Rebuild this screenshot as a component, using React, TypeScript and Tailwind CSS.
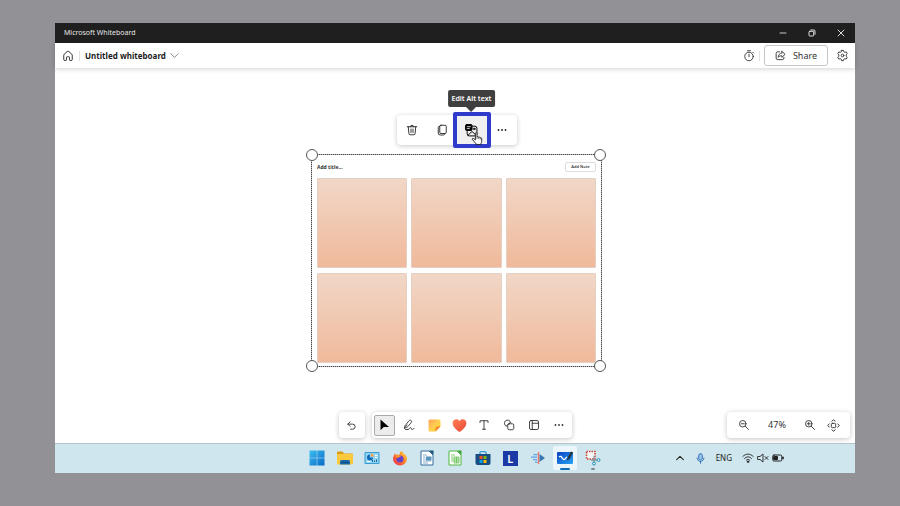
import type { ReactNode, SVGProps } from "react";

function Icon({ children, className = "size-3", ...rest }: SVGProps<SVGSVGElement>) {
  return (
    <svg
      viewBox="0 0 24 24"
      fill="none"
      stroke="currentColor"
      strokeWidth="1.8"
      strokeLinecap="round"
      strokeLinejoin="round"
      aria-hidden="true"
      className={"shrink-0 " + className}
      {...rest}
    >
      {children}
    </svg>
  );
}

function IconButton({ label, className = "", children }: { label: string; className?: string; children: ReactNode }) {
  return (
    <button type="button" aria-label={label} className={"flex items-center justify-center " + className}>
      {children}
    </button>
  );
}

const dots = (
  <Icon fill="currentColor" stroke="none">
    <circle cx="5" cy="12" r="1.8" />
    <circle cx="12" cy="12" r="1.8" />
    <circle cx="19" cy="12" r="1.8" />
  </Icon>
);

function TitleBar() {
  return (
    <div className="flex h-5 items-center justify-between bg-[#1f1f1f] pl-[9px] text-[#e8e8e8]">
      <span className="text-[7px]/5">Microsoft Whiteboard</span>
      <div className="flex h-full">
        <IconButton label="Minimize" className="w-[29px]">
          <Icon className="size-2"><path d="M3 12h18" strokeWidth="2.5" /></Icon>
        </IconButton>
        <IconButton label="Restore" className="w-[29px]">
          <Icon className="size-2" strokeWidth="2.8">
            <rect x="3" y="7" width="14" height="14" rx="2" />
            <path d="M8 3h10a3 3 0 0 1 3 3v10" />
          </Icon>
        </IconButton>
        <IconButton label="Close" className="w-[29px]">
          <Icon className="size-2" strokeWidth="2.8"><path d="M3 3l18 18M21 3L3 21" /></Icon>
        </IconButton>
      </div>
    </div>
  );
}

function Header() {
  return (
    <header className="relative z-10 flex h-[25px] items-center justify-between bg-white px-[6px] shadow-[0_1px_5px_rgba(0,0,0,0.18)]">
      <div className="flex items-center">
        <IconButton label="Home" className="size-[13px]">
          <Icon className="size-[12px]" strokeWidth="1.6">
            <path d="M3.500 10.300c0-.8.3-1.400.9-1.900l6-5.300a2.400 2.400 0 0 1 3.200 0l6 5.300c.6.500.9 1.100.9 1.900V19a2 2 0 0 1-2 2h-2a1.500 1.500 0 0 1-1.500-1.500V15a1.500 1.500 0 0 0-1.500-1.500h-3A1.500 1.500 0 0 0 9 15v4.500A1.500 1.500 0 0 1 7.500 21h-2a2 2 0 0 1-2-2z" />
          </Icon>
        </IconButton>
        <span className="ml-[5px] h-[10px] w-px bg-[#e0e0e0]" />
        <button type="button" className="ml-[5px] flex items-center gap-1 text-[8px]/4 font-bold text-[#1b1b1b]">
          <span>Untitled whiteboard</span>
          <Icon className="size-[9px] text-[#555]"><path d="M2 7l10 10L22 7" /></Icon>
        </button>
      </div>
      <div className="flex items-center text-[#333]">
        <IconButton label="Timer" className="size-[13px]">
          <Icon className="size-[12px]">
            <circle cx="12" cy="13" r="8.500" />
            <path d="M12 8.500v5M9 1.500h6M19.500 4.500L21 6" />
          </Icon>
        </IconButton>
        <span className="mx-[4px] h-[10px] w-px bg-[#e0e0e0]" />
        <button type="button" className="flex h-[21px] w-[64px] items-center justify-center gap-[7px] rounded-[3px] border border-[#c6c6c6] text-[9px]/4 text-[#333]">
          <Icon className="size-[11px]" strokeWidth="2">
            <path d="M10 4H6a3.500 3.500 0 0 0-3.500 3.500v10A3.500 3.500 0 0 0 6 21h10a3.500 3.500 0 0 0 3.500-3.500V16" />
            <path d="M15 3l7 6.500-7 6.500v-3.500c-4 0-6 1-8 3.500 0-5 3-9 8-9.500z" />
          </Icon>
          <span>Share</span>
        </button>
        <IconButton label="Settings" className="ml-[8px] size-[13px]">
          <Icon className="size-[13px]" strokeWidth="1.700">
            <path d="M10.200 2.500h3.600l.7 2.700 1.700 1 2.700-.8 1.900 3.200-2 1.900v3l2 1.900-1.900 3.200-2.700-.8-1.700 1-.7 2.700h-3.600l-.7-2.700-1.700-1-2.700.8-1.900-3.200 2-1.900v-3l-2-1.900 1.900-3.200 2.700.8 1.700-1z" />
            <circle cx="12" cy="12" r="2.500" />
          </Icon>
        </IconButton>
      </div>
    </header>
  );
}

function SelectionToolbar() {
  return (
    <div role="toolbar" aria-label="Selection" className="flex h-[30px] items-center rounded-[4px] bg-white text-[#222] shadow-[0_1px_5px_rgba(0,0,0,0.22)]">
      <IconButton label="Delete" className="size-[30px]">
        <Icon>
          <path d="M2.500 5.500h19M9 5.500a3 3 0 0 1 6 0M4.500 5.500l1.300 13.400A2.500 2.500 0 0 0 8.300 21.500h7.400a2.500 2.500 0 0 0 2.500-2.600L19.500 5.500M10 10v7M14 10v7" />
        </Icon>
      </IconButton>
      <IconButton label="Copy" className="size-[30px]">
        <Icon>
          <rect x="7.500" y="2.500" width="13" height="16.500" rx="2.500" />
          <path d="M7.500 4.500A2.500 2.500 0 0 0 4.500 7v11a4 4 0 0 0 4 4h6.500a2.500 2.500 0 0 0 2.500-2" />
        </Icon>
      </IconButton>
      <div className="relative -mx-[4px]">
        <button type="button" aria-label="Edit Alt text" className="flex h-[36px] w-[38px] items-center justify-center rounded-[2px] border-[4px] border-[#2f3bcb] bg-[#f0f0f0] text-black">
          <Icon className="size-[13px]">
            <path d="M14 4h4a4 4 0 0 1 4 4v10a4 4 0 0 1-4 4H8a4 4 0 0 1-4-4v-4" />
            <path d="M5.500 21l6-6a2.200 2.200 0 0 1 3 0l6 6" />
            <circle cx="17" cy="9" r="1.500" />
            <rect x="1" y="1" width="12" height="11" rx="2" fill="#000" />
            <path d="M4 5h6M4 8.500h4" stroke="#fff" strokeWidth="1.500" />
          </Icon>
        </button>
        <div role="tooltip" className="absolute bottom-full left-1/2 mb-[5px] -translate-x-1/2 rounded-[2px] bg-[#3f3f3f] px-1 text-[7px]/[17px] font-semibold whitespace-nowrap text-white">
          Edit Alt text
          <svg viewBox="0 0 10 5" aria-hidden="true" className="absolute top-full left-1/2 h-[5px] w-[10px] -translate-x-1/2">
            <path d="M0 0h10L5 5z" fill="#3f3f3f" />
          </svg>
        </div>
        <svg viewBox="0 0 22 24" aria-hidden="true" className="absolute top-[20px] left-[18px] h-[13px] w-[12px]">
          <path d="M8 2.500c0-1.800 3-1.800 3 0V9c1-.8 2.800-.4 3 .6 1-.6 2.500 0 2.700 1 1.300-.6 3 .1 3 1.600V17c0 2-1 3-1.500 4.500V23H9v-1.500C7 19 5 16.500 2.500 14c-1-1.500.8-2.800 2.200-1.900L8 14.500z" fill="#fff" stroke="#111" strokeWidth="1.600" strokeLinejoin="round" />
          <path d="M11 9v4M14 10v3M17 11v3" stroke="#333" strokeWidth="1.200" />
        </svg>
      </div>
      <IconButton label="More actions" className="size-[30px]">{dots}</IconButton>
    </div>
  );
}

function Board() {
  const handle = "absolute size-[12px] rounded-full border border-[#555] bg-white";
  return (
    <section aria-label="Note grid" className="relative w-[291px] border border-dotted border-[#444] bg-[#b4b4b4]">
      <div className="bg-white px-[5px] pb-[3px]">
        <div className="flex h-[23px] items-center justify-between text-[#333]">
          <h2 className="text-[5px]/3 font-bold">Add title...</h2>
          <button type="button" className="h-[10px] w-[31px] rounded-[2px] border border-[#ddd] text-[4px]/[8px] font-semibold">Add Note</button>
        </div>
        <div className="grid grid-cols-3 gap-x-[4px] gap-y-[5px]">
          {[0, 1, 2, 3, 4, 5].map((n) => (
            <div key={n} className="h-[90px] rounded-[1px] border border-[#e4cfc3] bg-linear-to-b from-[#f1d7c7] to-[#f0b99b]" />
          ))}
        </div>
      </div>
      <span className={handle + " -top-[6px] -left-[6px]"} />
      <span className={handle + " -top-[6px] -right-[5px]"} />
      <span className={handle + " -bottom-[6px] -left-[6px]"} />
      <span className={handle + " -right-[5px] -bottom-[6px]"} />
    </section>
  );
}

const panel = "flex h-[26px] items-center rounded-[4px] bg-white shadow-[0_1px_5px_rgba(0,0,0,0.24)]";

function BottomBar() {
  return (
    <div className="grid grid-cols-[1fr_auto_1fr] items-center px-[5px] pb-[5px] text-[#333]">
      <div className="col-start-2 flex gap-[7px]">
        <div className={panel}>
          <IconButton label="Undo" className="size-[26px]">
            <Icon className="size-[11px]" strokeWidth="2">
              <path d="M9 14L4 9l5-5M4 9h10.500a5.500 5.500 0 0 1 0 11H10" />
            </Icon>
          </IconButton>
        </div>
        <div role="toolbar" aria-label="Tools" className={panel}>
          <IconButton label="Select" className="mx-[2px] size-[21px] rounded-[2px] border border-[#aaa] bg-[#ececec]">
            <Icon fill="#000" stroke="none"><path d="M5 1v21.500l6.500-6.500H22z" /></Icon>
          </IconButton>
          <IconButton label="Ink" className="size-[25px]">
            <Icon>
              <path d="M3 18c0-3 1-5 3-7l6-7.500c3-3 7 .5 4.500 3.500L10 15c-2 2-4 3-7 3zM3 18l5-6M5 21h5c3 0 3-4 5-4s1 4 3 4 2-2 4-2" />
            </Icon>
          </IconButton>
          <IconButton label="Notes" className="size-[25px]">
            <svg viewBox="0 0 24 24" aria-hidden="true" className="size-[13px]">
              <defs><linearGradient id="note" x1="0" y1="0" x2="1" y2="1"><stop stopColor="#ff9e58" /><stop offset=".5" stopColor="#ffd04f" /><stop offset="1" stopColor="#ffc52e" /></linearGradient></defs>
              <path d="M3 1h17a3 3 0 0 1 3 3v10l-9 9H3a2 2 0 0 1-2-2V3a2 2 0 0 1 2-2z" fill="url(#note)" />
              <path d="M14 23v-6a3 3 0 0 1 3-3h6z" fill="#ee8a35" />
            </svg>
          </IconButton>
          <IconButton label="Reactions" className="size-[25px]">
            <svg viewBox="0 0 24 24" aria-hidden="true" className="size-[15px]">
              <defs><linearGradient id="heart" x1="0" y1="0" x2="1" y2="1"><stop stopColor="#ff8052" /><stop offset="1" stopColor="#e94738" /></linearGradient></defs>
              <path d="M12 22.500C7 19 1 14 1 8c0-6.500 8-8 11-3 3-5 11-3.500 11 3 0 6-6 11-11 14.500z" fill="url(#heart)" />
            </svg>
          </IconButton>
          <IconButton label="Text" className="size-[25px]">
            <Icon><path d="M4 7V3.500h16V7M12 3.500v17M9 20.500h6" /></Icon>
          </IconButton>
          <IconButton label="Shapes" className="size-[25px]">
            <Icon>
              <path d="M6.500 14.500A6.500 6.500 0 1 1 15.500 7" />
              <rect x="9.500" y="9.500" width="12" height="12" rx="3" />
              <path d="M7 14l7-7" />
            </Icon>
          </IconButton>
          <IconButton label="Templates" className="size-[25px]">
            <Icon><rect x="3" y="3" width="18" height="18" rx="3" /><path d="M8.500 3v18M8.500 8.500H21" /></Icon>
          </IconButton>
          <IconButton label="More tools" className="size-[25px]">{dots}</IconButton>
        </div>
      </div>
      <div className={panel + " justify-self-end text-[9px]/4"}>
        <IconButton label="Zoom out" className="w-[33px]">
          <Icon><circle cx="9.500" cy="9.500" r="6.500" /><path d="M14.500 14.500L21 21M6.500 9.500h6" /></Icon>
        </IconButton>
        <span className="w-[34px] text-center">47%</span>
        <IconButton label="Zoom in" className="w-[32px]">
          <Icon><circle cx="9.500" cy="9.500" r="6.500" /><path d="M14.500 14.500L21 21M6.500 9.500h6M9.500 6.500v6" /></Icon>
        </IconButton>
        <IconButton label="Fit to screen" className="mr-[10px] w-[14px]">
          <Icon className="size-[13px]">
            <rect x="8" y="8" width="8" height="8" rx="2" />
            <path d="M9 4l3-2.500L15 4M9 20l3 2.500 3-2.500M4 9l-2.500 3L4 15M20 9l2.500 3-2.500 3" />
          </Icon>
        </IconButton>
      </div>
    </div>
  );
}

function AppIcon({ children, className = "size-4" }: { children: ReactNode; className?: string }) {
  return <svg viewBox="0 0 32 32" aria-hidden="true" className={className}>{children}</svg>;
}

function Taskbar() {
  const app = "relative h-6 w-6";
  return (
    <footer className="grid h-[30px] grid-cols-[1fr_auto_1fr] items-center bg-[#cfe6ee] text-[#222] shadow-[inset_0_1px_0_#b5c3c9]">
      <nav aria-label="Apps" className="col-start-2 flex w-[300px] justify-between">
        <IconButton label="Start" className={app}>
          <AppIcon>
            <defs><linearGradient id="win" x1="0" y1="0" x2="1" y2="1"><stop stopColor="#3cc0f2" /><stop offset="1" stopColor="#0868c6" /></linearGradient></defs>
            <path d="M1 1h14.500v14.500H1zM16.500 1H31v14.500H16.500zM1 16.500h14.500V31H1zM16.500 16.500H31V31H16.500z" fill="url(#win)" />
          </AppIcon>
        </IconButton>
        <IconButton label="File Explorer" className={app}>
          <AppIcon>
            <path d="M0 5a2 2 0 0 1 2-2h9l3 4h16a2 2 0 0 1 2 2v5H0z" fill="#dd9c13" />
            <rect y="8" width="32" height="21" rx="2" fill="#fcc83c" />
            <path d="M6 29v-6a3 3 0 0 1 3-3h14a3 3 0 0 1 3 3v6z" fill="#1667a8" />
            <path d="M9 24h14v2H9z" fill="#0d4b80" />
          </AppIcon>
        </IconButton>
        <IconButton label="Control Panel" className={app}>
          <AppIcon>
            <rect x="1" y="4" width="30" height="24" rx="2" fill="#3b9bd4" />
            <rect x="3" y="6" width="26" height="20" fill="#8fd4f3" />
            <path d="M12 9a6 6 0 1 0 6 6h-6z" fill="#126ab5" />
            <path d="M14 7v6h6a6 6 0 0 0-6-6z" fill="#f5a14b" />
            <path d="M22 11h5M22 15h5M6 23h7" stroke="#fff" strokeWidth="2" />
            <path d="M17 24v-4M21 24v-3M25 24v-5" stroke="#1565a8" strokeWidth="2" />
          </AppIcon>
        </IconButton>
        <IconButton label="Firefox" className={app}>
          <AppIcon>
            <defs><linearGradient id="fox" x1="1" y1="0" x2="0" y2="1"><stop stopColor="#ffe13f" /><stop offset=".5" stopColor="#ff7b28" /><stop offset="1" stopColor="#e9245e" /></linearGradient></defs>
            <path d="M18 2c4 2 6 5 6 8l2-2c3 3 4 7 4 10a14 13 0 0 1-28 0c0-5 2-9 5-12v4c3-2 6-1 8 0 0-4 1-6 3-8z" fill="url(#fox)" />
            <circle cx="16" cy="18" r="7" fill="#6741c5" />
            <path d="M7 11c4-3 8 0 11 2-3 0-4 2-6 3-3 0-4-2-5-5z" fill="#ff9428" />
          </AppIcon>
        </IconButton>
        <IconButton label="LibreOffice Writer" className={app}>
          <AppIcon>
            <path d="M4 2h16l8 8v20H4z" fill="#fff" stroke="#326c9c" strokeWidth="2" />
            <path d="M20 1h9v9z" fill="#174f79" />
            <path d="M8 10h8M8 14h5M8 18h5M8 22h16M8 26h10" stroke="#6b9dc2" strokeWidth="1.600" />
            <rect x="14" y="13" width="11" height="8" fill="#5694be" />
          </AppIcon>
        </IconButton>
        <IconButton label="LibreOffice Calc" className={app}>
          <AppIcon>
            <path d="M4 2h16l8 8v20H4z" fill="#fff" stroke="#50b83c" strokeWidth="2" />
            <path d="M20 1h9v9z" fill="#3a9e31" />
            <path d="M8 10h8M8 14h5M8 18h5M8 22h5" stroke="#5dbc4c" strokeWidth="1.600" />
            <path d="M14 14h10v12H14zM14 18h10M14 22h10M19 14v12" stroke="#5dbc4c" strokeWidth="1.500" fill="#def4da" />
          </AppIcon>
        </IconButton>
        <IconButton label="Microsoft Store" className={app}>
          <AppIcon>
            <path d="M10 9V5a2 2 0 0 1 2-2h8a2 2 0 0 1 2 2v4" fill="none" stroke="#2d9cda" strokeWidth="2.500" />
            <path d="M1 8h30v18a4 4 0 0 1-4 4H5a4 4 0 0 1-4-4z" fill="#174d83" />
            <path d="M9 12h6v6H9z" fill="#f25022" /><path d="M17 12h6v6h-6z" fill="#7fba00" />
            <path d="M9 20h6v6H9z" fill="#00a4ef" /><path d="M17 20h6v6h-6z" fill="#ffb900" />
          </AppIcon>
        </IconButton>
        <IconButton label="L" className={app}>
          <span className="size-[15px] bg-[#1b3aa5] text-[11px]/[15px] font-semibold text-white">L</span>
        </IconButton>
        <IconButton label="Media tool" className={app}>
          <AppIcon>
            <path d="M7 9h8M2 14h12M6 19h8M10 24h5" stroke="#5aa2e4" strokeWidth="2.500" />
            <path d="M17 4v24" stroke="#e97a70" strokeWidth="3" />
            <path d="M19 8l11 8-11 8z" fill="#3779ae" />
          </AppIcon>
        </IconButton>
        <IconButton label="Whiteboard" className={app + " rounded-[2px] bg-[#ebf6fa]"}>
          <AppIcon>
            <defs><linearGradient id="wb" x1="0" y1="0" x2="1" y2="1"><stop stopColor="#0b3fc1" /><stop offset="1" stopColor="#25a6f4" /></linearGradient></defs>
            <rect x="0" y="4" width="32" height="24" rx="2" fill="url(#wb)" />
            <path d="M4 14c5-5 6 5 10 5 3 0 3-4 6-5" fill="none" stroke="#fff" strokeWidth="2.500" />
            <path d="M21 16l7-13 4 2-7 13-5 3z" fill="#263238" />
          </AppIcon>
          <span className="absolute bottom-0 left-1/2 h-[2px] w-[10px] -translate-x-1/2 rounded-full bg-[#0d70b8]" />
        </IconButton>
        <IconButton label="Snipping Tool" className={app}>
          <AppIcon>
            <rect x="3" y="3" width="17" height="15" fill="#f5f8f9" stroke="#c74635" strokeWidth="3" strokeDasharray="3 2" />
            <path d="M18 12v12M12 20h12" stroke="#80939c" strokeWidth="2.500" />
            <circle cx="18" cy="27" r="3" fill="none" stroke="#2994ba" strokeWidth="2" />
            <circle cx="27" cy="20" r="3" fill="none" stroke="#2994ba" strokeWidth="2" />
          </AppIcon>
          <span className="absolute bottom-0 left-1/2 h-[2px] w-1 -translate-x-1/2 rounded-full bg-[#7e8d93]" />
        </IconButton>
      </nav>
      <div className="mr-[71px] flex items-center justify-self-end text-[8px]/4">
        <Icon className="size-[10px]" strokeWidth="2.500"><path d="M4 16l8-8 8 8" /></Icon>
        <Icon className="ml-[10px] size-[11px] text-[#2b6cb5]" strokeWidth="2">
          <rect x="8" y="1.500" width="8" height="14" rx="4" fill="#9bc6e8" /><path d="M4.500 11c0 10 15 10 15 0M12 19v3.500" />
        </Icon>
        <span className="ml-[10px]">ENG</span>
        <Icon className="ml-[10px] size-[12px]">
          <path d="M1.500 9c6-6.500 15-6.500 21 0M5 13c4-4.500 10-4.500 14 0M8.500 16.500c2-2.200 5-2.200 7 0" />
          <circle cx="12" cy="19.500" r="1.500" fill="currentColor" />
        </Icon>
        <Icon className="ml-[3px] size-[12px]"><path d="M2 9h4l6-5v16l-6-5H2zM16 9l6 6M22 9l-6 6" /></Icon>
        <Icon className="ml-[3px] size-[12px]" strokeWidth="2">
          <rect x="1.500" y="6" width="18" height="12" rx="2.500" /><path d="M4 9h7v6H4z" fill="currentColor" /><path d="M22 10.500v3" strokeWidth="3" />
        </Icon>
      </div>
    </footer>
  );
}

export default function App() {
  return (
    <div className="flex min-h-screen flex-col bg-[#929196] pt-[23px] pr-[45px] pb-[33px] pl-[55px] font-['Noto_Sans','Open_Sans',sans-serif]">
      <div className="flex flex-1 flex-col bg-white">
        <TitleBar />
        <Header />
        <main className="flex flex-1 flex-col justify-between">
          <div className="flex flex-col items-center gap-[9px] pt-[47px] pl-[3px]">
            <SelectionToolbar />
            <Board />
          </div>
          <BottomBar />
        </main>
        <Taskbar />
      </div>
    </div>
  );
}
